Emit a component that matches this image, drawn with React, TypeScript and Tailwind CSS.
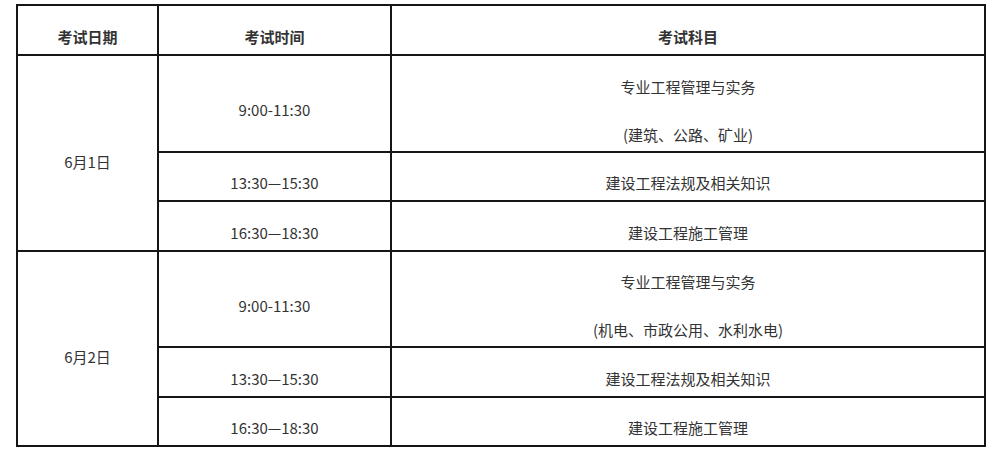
import React from 'react'

type Slot = { time: string; subject: string[]; h: string }
type Day = { date: string; slots: Slot[] }

const days: Day[] = [
  {
    date: '6月1日',
    slots: [
      { time: '9:00-11:30', subject: ['专业工程管理与实务', '(建筑、公路、矿业)'], h: 'h-[97px]' },
      { time: '13:30—15:30', subject: ['建设工程法规及相关知识'], h: 'h-[49px]' },
      { time: '16:30—18:30', subject: ['建设工程施工管理'], h: 'h-[50px]' },
    ],
  },
  {
    date: '6月2日',
    slots: [
      { time: '9:00-11:30', subject: ['专业工程管理与实务', '(机电、市政公用、水利水电)'], h: 'h-[96px]' },
      { time: '13:30—15:30', subject: ['建设工程法规及相关知识'], h: 'h-[50px]' },
      { time: '16:30—18:30', subject: ['建设工程施工管理'], h: 'h-[49px]' },
    ],
  },
]

const cell = 'border-2 border-[#151515] text-center align-middle p-0 pt-[14px]'

export default function App() {
  return (
    <div
      className="w-[1002px] h-[453px] bg-white pt-[4px] pl-[16px] text-[15px] text-[#333]"
      style={{ fontFamily: '"Noto Sans CJK SC", "Noto Sans", sans-serif' }}
    >
      <table className="table-fixed border-collapse w-[970px]">
        <colgroup>
          <col className="w-[141px]" />
          <col className="w-[233px]" />
          <col />
        </colgroup>
        <thead>
          <tr className="h-[50px]">
            <th className={`${cell} font-bold`}>考试日期</th>
            <th className={`${cell} font-bold`}>考试时间</th>
            <th className={`${cell} font-bold`}>考试科目</th>
          </tr>
        </thead>
        <tbody>
          {days.map((d) =>
            d.slots.map((s, i) => (
              <tr key={d.date + i} className={s.h}>
                {i === 0 && (
                  <td rowSpan={3} className={`${cell} pt-[18px]`}>
                    {d.date}
                  </td>
                )}
                <td className={cell}>{s.time}</td>
                <td className={cell}>
                  {s.subject.length > 1 ? (
                    <div className="flex flex-col gap-[26px]">
                      {s.subject.map((t) => (
                        <span key={t} className="leading-[22px]">{t}</span>
                      ))}
                    </div>
                  ) : (
                    s.subject[0]
                  )}
                </td>
              </tr>
            ))
          )}
        </tbody>
      </table>
    </div>
  )
}
